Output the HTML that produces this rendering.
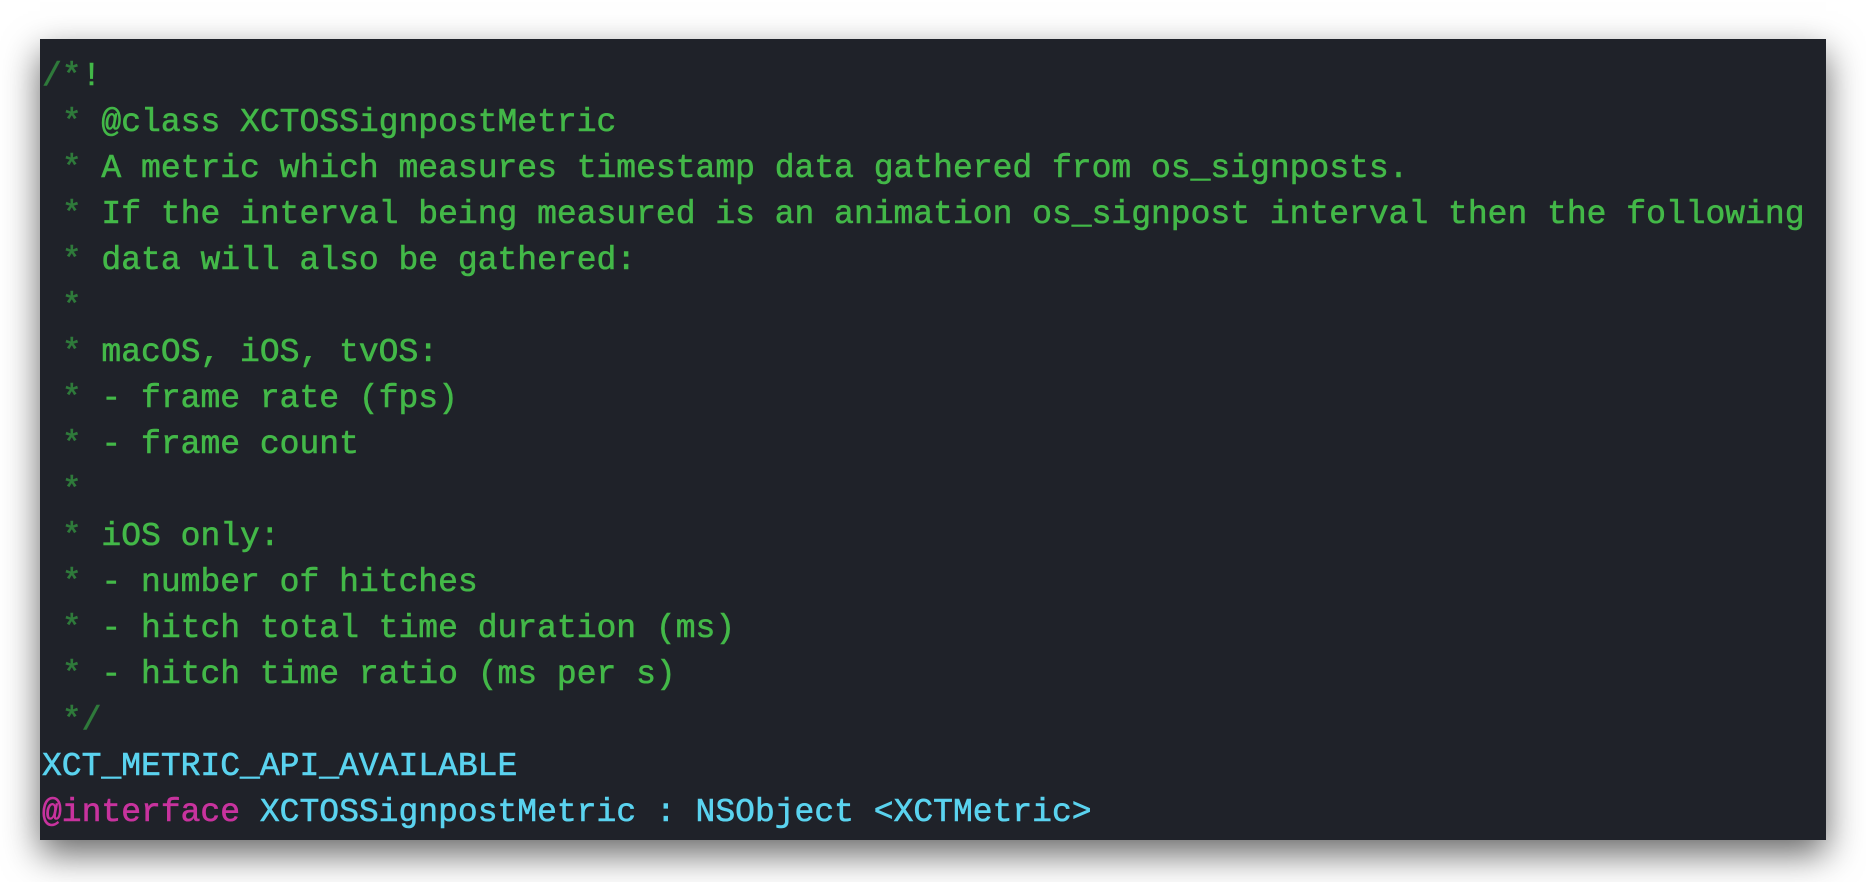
<!DOCTYPE html>
<html><head><style>
body{margin:0;width:1866px;height:882px;background:#fff;overflow:hidden;}
.p{position:absolute;left:40px;top:39px;width:1786px;height:801px;background:#1f2229;box-shadow:0 14px 34px rgba(0,0,0,.6);}
pre{margin:0;position:absolute;left:2px;top:15px;font-family:"Liberation Mono",monospace;font-size:33px;line-height:46px;color:#43b848;-webkit-text-stroke:0.6px currentColor;}
.d{color:#2f7a3b}.c{color:#5ad3ef}.m{color:#c8339e}
</style></head><body><div class="p"><pre><span class="d">/*</span>!
 <span class="d">*</span> @class XCTOSSignpostMetric
 <span class="d">*</span> A metric which measures timestamp data gathered from os_signposts.
 <span class="d">*</span> If the interval being measured is an animation os_signpost interval then the following
 <span class="d">*</span> data will also be gathered:
 <span class="d">*</span>
 <span class="d">*</span> macOS, iOS, tvOS:
 <span class="d">*</span> - frame rate (fps)
 <span class="d">*</span> - frame count
 <span class="d">*</span>
 <span class="d">*</span> iOS only:
 <span class="d">*</span> - number of hitches
 <span class="d">*</span> - hitch total time duration (ms)
 <span class="d">*</span> - hitch time ratio (ms per s)
 <span class="d">*/</span>
<span class="c">XCT_METRIC_API_AVAILABLE</span>
<span class="m">@interface</span> <span class="c">XCTOSSignpostMetric : NSObject &lt;XCTMetric&gt;</span></pre></div></body></html>
